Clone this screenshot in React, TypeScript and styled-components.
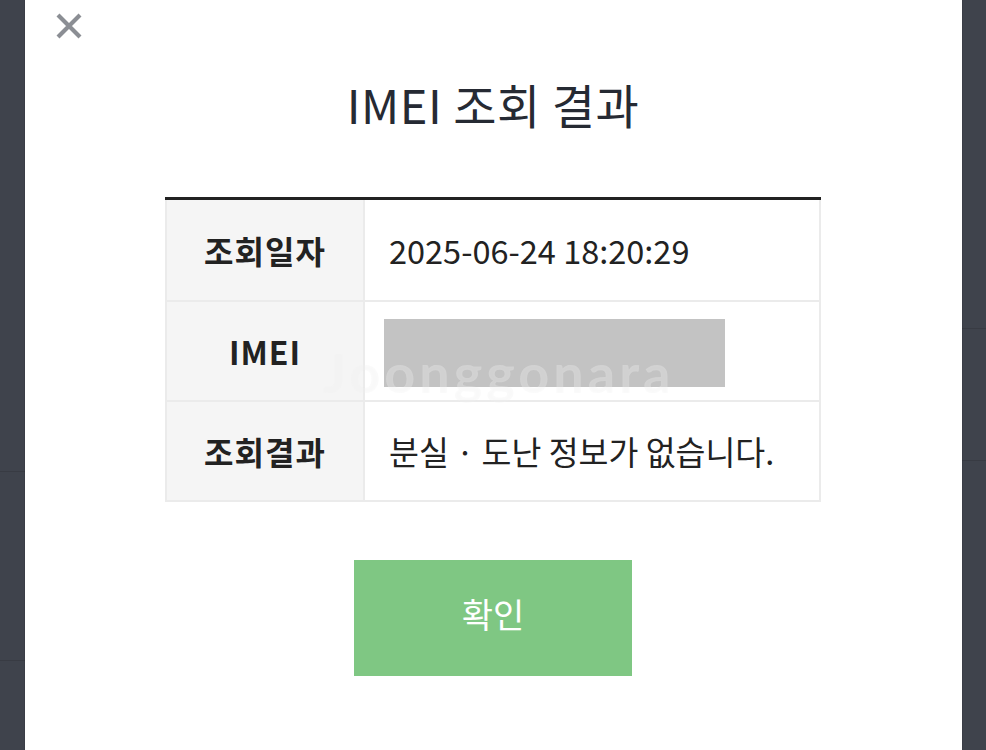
import styled, { createGlobalStyle } from 'styled-components';

const GlobalStyle = createGlobalStyle`
  html, body {
    margin: 0;
    padding: 0;
    background: #3f434c;
    font-family: 'Noto Sans CJK KR', 'Noto Sans', sans-serif;
  }
`;

const Screen = styled.div`
  display: flex;
  width: 986px;
  height: 750px;
  overflow: hidden;
`;

const Side = styled.div<{ $lines: number[] }>`
  flex: 1;
  background-color: #3f434c;
  background-image: ${({ $lines }) =>
    $lines
      .map(
        (y) =>
          `linear-gradient(to bottom, transparent ${y}px, #383b43 ${y}px, #383b43 ${y + 1}px, transparent ${y + 1}px)`
      )
      .join(', ')};
`;

const Modal = styled.div`
  position: relative;
  width: 937px;
  height: 750px;
  background: #ffffff;
  box-shadow: 0 0 0 1px rgba(0, 0, 0, 0.08);
  display: flex;
  flex-direction: column;
  align-items: center;
  padding-top: 76px;
  box-sizing: border-box;
`;

const CloseButton = styled.button`
  position: absolute;
  top: 10px;
  left: 28px;
  width: 32px;
  height: 32px;
  padding: 0;
  border: 0;
  background: none;
  display: flex;
  align-items: center;
  justify-content: center;
`;

const Title = styled.h1`
  margin: 0;
  font-size: 47px;
  line-height: 56px;
  font-weight: 400;
  color: #262a33;
  letter-spacing: 0.5px;
`;

const Table = styled.table`
  margin-top: 65px;
  width: 656px;
  border-collapse: collapse;
  border-top: 3px solid #222222;
`;

const Row = styled.tr<{ $first?: boolean }>`
  height: ${({ $first }) => ($first ? 102 : 100)}px;
`;

const LabelCell = styled.th`
  width: 196px;
  padding: 0;
  background: #f5f5f5;
  border: 2px solid #ebebeb;
  border-top: 0;
  font-size: 32px;
  font-weight: 700;
  letter-spacing: 1px;
  color: #222222;
  text-align: center;
`;

const ValueCell = styled.td`
  position: relative;
  padding: 0 0 0 24px;
  border: 2px solid #ebebeb;
  border-top: 0;
  font-size: 32.5px;
  font-weight: 400;
  color: #222222;
  text-align: left;
`;

const Redacted = styled.div`
  width: 341px;
  height: 68px;
  background: #c3c3c3;
  margin: 4px 0 0 -5px;
`;

const Watermark = styled.span`
  position: absolute;
  left: -42px;
  bottom: 0px;
  font-family: 'Lato', sans-serif;
  font-weight: 700;
  font-size: 54px;
  letter-spacing: 4px;
  line-height: 1;
  color: rgba(255, 255, 255, 0.32);
  text-shadow: 0 0 1px rgba(0, 0, 0, 0.03);
  pointer-events: none;
  white-space: nowrap;
`;

const ConfirmButton = styled.button`
  margin-top: 58px;
  width: 278px;
  height: 116px;
  border: 0;
  background: #7fc783;
  color: #ffffff;
  font-family: inherit;
  font-size: 34px;
  font-weight: 400;
  padding: 0 0 8px;
`;

const rows = [
  { label: '조회일자', value: '2025-06-24 18:20:29' },
  { label: 'IMEI', value: null },
  { label: '조회결과', value: '분실 · 도난 정보가 없습니다.' },
];

function App() {
  return (
    <>
      <GlobalStyle />
      <Screen>
        <Side $lines={[471, 660]} />
        <Modal>
          <CloseButton aria-label="닫기">
            <svg width="28" height="28" viewBox="0 0 28 28">
              <path
                d="M3 3 L25 25 M25 3 L3 25"
                stroke="#8b8e94"
                strokeWidth="4.2"
                strokeLinecap="butt"
              />
            </svg>
          </CloseButton>
          <Title>IMEI 조회 결과</Title>
          <Table>
            <tbody>
              {rows.map((r, i) => (
                <Row key={r.label} $first={i === 0}>
                  <LabelCell>{r.label}</LabelCell>
                  <ValueCell>
                    {r.value ?? (
                      <>
                        <Redacted />
                        <Watermark>Joonggonara</Watermark>
                      </>
                    )}
                  </ValueCell>
                </Row>
              ))}
            </tbody>
          </Table>
          <ConfirmButton>확인</ConfirmButton>
        </Modal>
        <Side $lines={[328, 460]} />
      </Screen>
    </>
  );
}

export default App;
